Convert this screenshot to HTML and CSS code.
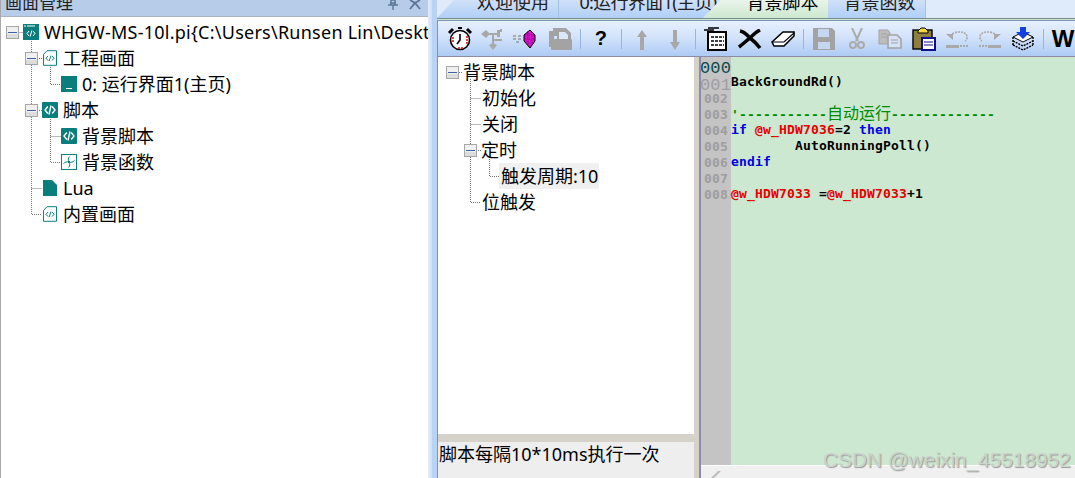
FILE: index.html
```html
<!DOCTYPE html>
<html lang="zh">
<head>
<meta charset="utf-8">
<title>画面管理</title>
<link rel="stylesheet" href="styles.css">
</head>
<body>
<svg class="defs" width="0" height="0" aria-hidden="true">
  <defs>
    <symbol id="exp" viewBox="0 0 13 13">
      <rect x=".5" y=".5" width="12" height="12" fill="#f0f0f0" stroke="#a6a6a6"/>
      <rect x="1" y="8" width="11" height="4" fill="#dcdcdc"/>
      <rect x="2" y="6" width="9" height="1" fill="#3f5fa8"/>
    </symbol>
    <symbol id="code-outline" viewBox="0 0 16 16">
      <path d="M1.5 4.5 5 .7H14.5V15.3H1.5Z" fill="#fff" stroke="#0d7f7f" stroke-width="1"/>
      <path d="M6 6 4 8.3 6 10.6M10 6l2 2.3-2 2.3M8.9 5.6 7.2 11" fill="none" stroke="#0d7f7f"/>
    </symbol>
    <symbol id="code-solid" viewBox="0 0 16 16">
      <rect width="16" height="16" rx="1" fill="#0a7d7d"/>
      <path d="M5.8 4.5 3 8l2.8 3.5M10.2 4.5 13 8l-2.8 3.5M9 3.500 7 12.500" fill="none" stroke="#fff" stroke-width="1.4"/>
    </symbol>
    <symbol id="flow" viewBox="0 0 16 16">
      <rect x=".5" y=".5" width="15" height="15" fill="#fff" stroke="#0d7f7f"/>
      <path d="M8 8C7 6 7 4 8.500 2.500M8 8C10 9 12 8 13.500 6.500M8 8C6 7.500 4 8 2.500 9.500M8 8C9 10 9 12 7.500 13.500" fill="none" stroke="#0d7f7f"/>
      <circle cx="8" cy="8" r="1.200" fill="#0d7f7f"/>
    </symbol>
  </defs>
</svg>

<div class="app">
  <aside class="left-panel">
    <header class="panel-head">
      <span class="panel-title">画面管理</span>
      <span class="panel-btns">
        <svg width="12" height="10" viewBox="0 0 12 10"><path d="M3 3h6M4 0h4v5H4zM1 5h10M6 5v5" fill="none" stroke="#5a7596" stroke-width="1.4"/></svg>
        <svg width="14" height="10" viewBox="0 0 14 10"><path d="M2 9 7 3l5 6M2 0l5 3 5-3" fill="none" stroke="#5a7596" stroke-width="1.8"/></svg>
      </span>
    </header>
    <div class="tree project-tree">
      <svg class="tree-lines" width="120" height="230" viewBox="0 0 120 230">
        <path d="M18.500 15.500H23M31.500 22V197.500H42M31.500 171.500H42M37 41.500H42M50.500 48V67.500H61M50.500 100V145.500H61M50.500 119.500H61M37 93.500H42" fill="none" stroke="#777" stroke-dasharray="1 1"/>
      </svg>
      <div class="row lv0"><svg class="exp" width="13" height="13"><use href="#exp"/></svg>
        <svg class="ico" width="16" height="16" viewBox="0 0 16 16"><rect width="16" height="16" fill="#0a7d7d"/><path d="M1 2h2M4 2h8" stroke="#fff"/><path d="M6 7 4 9.500 6 12M10 7l2 2.500L10 12M8.800 6.500 7.200 12.500" fill="none" stroke="#fff"/></svg>
        <span class="label root-label">WHGW-MS-10l.pi{C:\Users\Runsen Lin\Desktop\WHGW-MS-10l</span></div>
      <div class="row lv1"><svg class="exp" width="13" height="13"><use href="#exp"/></svg>
        <svg class="ico" width="16" height="16"><use href="#code-outline"/></svg>
        <span class="label">工程画面</span></div>
      <div class="row lv2">
        <svg class="ico" width="16" height="16" viewBox="0 0 16 16"><rect width="16" height="16" fill="#0a7d7d"/><rect x="5" y="12" width="6" height="1" fill="#fff"/></svg>
        <span class="label">0: 运行界面1(主页)</span></div>
      <div class="row lv1"><svg class="exp" width="13" height="13"><use href="#exp"/></svg>
        <svg class="ico" width="16" height="16"><use href="#code-solid"/></svg>
        <span class="label">脚本</span></div>
      <div class="row lv2">
        <svg class="ico" width="16" height="16"><use href="#code-solid"/></svg>
        <span class="label">背景脚本</span></div>
      <div class="row lv2">
        <svg class="ico" width="16" height="16"><use href="#flow"/></svg>
        <span class="label">背景函数</span></div>
      <div class="row lv1b">
        <svg class="ico" width="16" height="16" viewBox="0 0 16 16"><path d="M1 0H10L15 5V16H1Z" fill="#0a7d7d"/></svg>
        <span class="label">Lua</span></div>
      <div class="row lv1b">
        <svg class="ico" width="16" height="16"><use href="#code-outline"/></svg>
        <span class="label">内置画面</span></div>
    </div>
  </aside>

  <div class="splitter"></div>

  <main class="workspace">
    <nav class="tabs">
      <span class="tab tab-welcome">欢迎使用</span>
      <span class="tab tab-run">0:运行界面1(主页)</span>
      <span class="tab tab-active">背景脚本</span>
      <span class="tab tab-func">背景函数</span>
    </nav>
    <div class="tab-rule"></div>
    <div class="editor-frame">
      <div class="toolbar">
        <span class="tool"><svg width="26" height="24" viewBox="0 0 26 24"><path d="M2 6 6 2M24 6l-4-4" stroke="#000" stroke-width="3"/><path d="M11 1h4" stroke="#000" stroke-width="2"/><circle cx="13" cy="13" r="9.500" fill="#fff" stroke="#000" stroke-width="1.600"/><path d="M13 7v6l-3 4" fill="none" stroke="#000" stroke-width="1.600"/><path d="M20 9v8M6 10v6M11 21h6" stroke="#e01818" stroke-width="1.600" stroke-dasharray="2 1"/></svg></span>
        <span class="tool"><svg width="26" height="24" viewBox="0 0 26 24"><g fill="#a8a8a8"><path d="M1 7 6 3l4 4-4 4z"/><rect x="9" y="6" width="10" height="2"/><rect x="12" y="6" width="2" height="12"/><rect x="12" y="12" width="10" height="2"/><path d="M13 16l4 2-4 5-4-5z"/><path d="M17 3h3v7h-3zM20 2h2v3h-2z"/></g></svg></span>
        <span class="tool"><svg width="26" height="24" viewBox="0 0 26 24"><path d="M0 9h3M5 9h3M0 12h3M5 12h3M3 15h3" stroke="#999" stroke-width="1.500"/><path d="M17 3l5 5v6l-5 7-6-7V8z" fill="#d014c8" stroke="#000"/><path d="M12 8h9M12 12h9M15 4v15M19 5v13" stroke="#7a0a78" stroke-dasharray="1 1"/></svg></span>
        <span class="tool"><svg width="26" height="24" viewBox="0 0 26 24"><path d="M6 1h13l5 5v8H10V9H6z" fill="#a3a3a3"/><rect x="2" y="4" width="5" height="16" fill="#a3a3a3"/><rect x="4" y="12" width="21" height="11" rx="1" fill="#a3a3a3"/><path d="M12 5h6l3 3v4H12z" fill="#dbe8fb"/></svg></span>
        <span class="tool-sep"></span>
        <span class="tool tool-text">?</span>
        <span class="tool-sep"></span>
        <span class="tool"><svg width="14" height="24" viewBox="0 0 14 24"><path d="M7 3 12 10H9V23H5V10H2Z" fill="#a8a8a8"/></svg></span>
        <span class="tool"><svg width="14" height="24" viewBox="0 0 14 24"><path d="M7 23 12 15H9V3H5V15H2Z" fill="#a8a8a8"/></svg></span>
        <span class="tool-sep"></span>
        <span class="tool"><svg width="26" height="24" viewBox="0 0 26 24"><path d="M1 3h10M5 1h11" stroke="#000" stroke-width="1.500"/><rect x="5" y="5" width="18" height="18" fill="#fff" stroke="#000" stroke-width="2"/><path d="M8 10h13M8 14h13M8 18h13" stroke="#000" stroke-dasharray="3 1" stroke-width="1.400"/></svg></span>
        <span class="tool"><svg width="24" height="20" viewBox="0 0 24 20"><path d="M2 2C7 3 10 7 12 9 15 6 18 3 22 1M12 9C8 12 5 15 1 18M12 9C16 12 19 15 22 19" fill="none" stroke="#000" stroke-width="3.500"/></svg></span>
        <span class="tool"><svg width="24" height="18" viewBox="0 0 24 18"><path d="M1 12 12 2h11v4L13 16H3z" fill="#fff" stroke="#000" stroke-width="1.600"/><path d="M1 12h12l10-9" fill="none" stroke="#000" stroke-width="1.200"/></svg></span>
        <span class="tool-sep"></span>
        <span class="tool"><svg width="22" height="22" viewBox="0 0 22 22"><path d="M0 0h19l3 3v19H0z" fill="#a3a3a3"/><rect x="5" y="1" width="11" height="8" fill="#c4d6f0"/><rect x="5" y="14" width="12" height="7" fill="#c4d6f0"/></svg></span>
        <span class="tool"><svg width="16" height="22" viewBox="0 0 16 22"><path d="M3 0 9 13M13 0 7 13" stroke="#ababab" stroke-width="2"/><circle cx="4" cy="17" r="3" fill="none" stroke="#ababab" stroke-width="2"/><circle cx="12" cy="17" r="3" fill="none" stroke="#ababab" stroke-width="2"/></svg></span>
        <span class="tool"><svg width="24" height="20" viewBox="0 0 24 20"><path d="M1 1h9l2 3v11H1z" fill="#bcbcbc" stroke="#a3a3a3"/><path d="M10 6h9l4 4v9H10z" fill="#d6e3f7" stroke="#a3a3a3" stroke-width="1.600"/><path d="M13 11h7M13 14h7M3 5h6M3 8h6" stroke="#a3a3a3"/></svg></span>
        <span class="tool"><svg width="24" height="24" viewBox="0 0 24 24"><rect x="1" y="3" width="19" height="19" fill="#8e7f3e" stroke="#000" stroke-width="1.400"/><path d="M6 4l3-3h4l3 3v2H6z" fill="#f4d83a" stroke="#000"/><rect x="10" y="11" width="13" height="12" fill="#fff" stroke="#0b0f8c" stroke-width="2"/><path d="M12 15h9M12 18h9" stroke="#0b0f8c"/></svg></span>
        <span class="tool"><svg width="24" height="18" viewBox="0 0 24 18"><path d="M5 6C9 1 17 1 21 4c2 3 1 6-1 7" fill="none" stroke="#a9a9a9" stroke-width="1.600" stroke-dasharray="2 1"/><path d="M1 4h7v6z" fill="#a9a9a9"/><rect x="1" y="15" width="13" height="3" fill="#a9a9a9"/><path d="M15 16h8" stroke="#a9a9a9" stroke-width="2" stroke-dasharray="2 1"/></svg></span>
        <span class="tool"><svg width="24" height="18" viewBox="0 0 24 18"><path d="M19 6C15 1 7 1 3 4c-2 3-1 6 1 7" fill="none" stroke="#a9a9a9" stroke-width="1.600" stroke-dasharray="2 1"/><path d="M23 4h-7v6z" fill="#a9a9a9"/><rect x="10" y="15" width="13" height="3" fill="#a9a9a9"/><path d="M1 16h8" stroke="#a9a9a9" stroke-width="2" stroke-dasharray="2 1"/></svg></span>
        <span class="tool"><svg width="24" height="24" viewBox="0 0 24 24"><path d="M2 10 12 5l10 5-10 5z" fill="#fff" stroke="#000"/><path d="M2 14l10 5 10-5M2 18l10 5 10-5M2 10v8M22 10v8" fill="none" stroke="#000" stroke-width="1.400" stroke-dasharray="2 1"/><path d="M9 0h6v5h4l-7 7-7-7h4z" fill="#1440e0"/></svg></span>
        <span class="tool-sep"></span>
        <span class="tool tool-w">W</span>
      </div>

      <div class="editor-body">
        <section class="script-pane">
          <div class="tree script-tree">
            <svg class="tree-lines" width="120" height="170" viewBox="0 0 120 170">
              <path d="M21 15.500H25M32.500 22V145.500H43M32.500 41.500H43M32.500 67.500H43M38 93.500H43M51.500 100V119.500H61" fill="none" stroke="#777" stroke-dasharray="1 1"/>
            </svg>
            <div class="srow s0"><svg class="exp" width="13" height="13"><use href="#exp"/></svg><span class="label">背景脚本</span></div>
            <div class="srow s1"><span class="label">初始化</span></div>
            <div class="srow s1"><span class="label">关闭</span></div>
            <div class="srow s1x"><svg class="exp" width="13" height="13"><use href="#exp"/></svg><span class="label">定时</span></div>
            <div class="srow s2"><span class="label selected">触发周期:10</span></div>
            <div class="srow s1"><span class="label">位触发</span></div>
          </div>
          <div class="hint">脚本每隔10*10ms执行一次</div>
        </section>

        <div class="pane-divider"></div>

        <section class="code-pane">
          <div class="code-main">
            <div class="gutter">
              <div class="num-cur">000</div>
              <div class="num-big">001</div>
              <div class="num">002</div>
              <div class="num">003</div>
              <div class="num">004</div>
              <div class="num">005</div>
              <div class="num">006</div>
              <div class="num">007</div>
              <div class="num">008</div>
            </div>
            <div class="code">
              <div class="ln"></div>
              <div class="ln">BackGroundRd()</div>
              <div class="ln"></div>
              <div class="ln cmt">'-----------<span class="cjk">自动运行</span>-------------</div>
              <div class="ln"><b class="kw">if</b> <b class="var">@w_HDW7036</b>=2 <b class="kw">then</b></div>
              <div class="ln">        AutoRunningPoll()</div>
              <div class="ln kw">endif</div>
              <div class="ln"></div>
              <div class="ln"><b class="var">@w_HDW7033</b> =<b class="var">@w_HDW7033</b>+1</div>
            </div>
          </div>
          <div class="code-scroll"><svg class="scroll-mark" width="12" height="10" viewBox="0 0 12 10"><path d="M1 10 8 3h3L4 10z" fill="#bdbdbd"/></svg></div>
        </section>
      </div>
    </div>
  </main>
</div>
<div class="watermark">CSDN @weixin_45518952</div>
</body>
</html>
```

FILE: styles.css
```css
* { box-sizing: border-box; }
html, body { margin: 0; padding: 0; height: 100%; overflow: hidden; }
body {
  background: #fff;
  font-family: "Noto Sans", "Noto Sans CJK SC", sans-serif;
  font-size: 18px;
  color: #000;
}
.defs { position: absolute; }
.app { display: flex; width: 1075px; height: 478px; position: relative; overflow: hidden; }

.left-panel {
  width: 428px;
  flex: none;
  display: flex;
  flex-direction: column;
  border-left: 1px solid #a9a9a9;
  background: #fff;
  overflow: hidden;
}
.panel-head {
  height: 17px;
  flex: none;
  background: #b6cce8;
  border-bottom: 1px solid #a9b4c2;
  display: flex;
  justify-content: space-between;
  padding: 0 6px 0 4px;
  overflow: hidden;
  font-size: 17px;
  color: #222;
}
.panel-title { line-height: 5px; }
.panel-btns { display: flex; gap: 9px; align-items: flex-start; }

.tree { position: relative; overflow: hidden; }
.project-tree { padding-top: 2px; flex: 1; }
.tree-lines { position: absolute; left: -1px; top: 0; }
.script-tree .tree-lines { left: 0; }

.row, .srow {
  height: 26px;
  display: flex;
  align-items: center;
  white-space: nowrap;
  position: relative;
}
.exp, .ico { flex: none; }
.label { line-height: 26px; }
.root-label { letter-spacing: .25px; }

.lv0 { padding-left: 5px; }
.lv0 .exp { margin-right: 4px; }
.lv0 .ico { margin-right: 5px; }
.lv1 { padding-left: 24px; }
.lv1 .exp { margin-right: 4px; }
.lv1 .ico { margin-right: 5px; }
.lv1b { padding-left: 41px; }
.lv1b .ico { margin-right: 5px; }
.lv2 { padding-left: 60px; }
.lv2 .ico { margin-right: 5px; }

.splitter {
  width: 9px;
  flex: none;
  background: linear-gradient(to right, #e3ecf8, #cfe0f5 40%, #b9d3f6 50%);
}

.workspace {
  flex: 1;
  min-width: 0;
  display: flex;
  flex-direction: column;
  background: #bcd5f6;
}
.tabs {
  height: 18px;
  flex: none;
  display: flex;
  background: #dfeafa;
  overflow: hidden;
  color: #222;
}
.tab {
  line-height: 5px;
  display: block;
  text-align: center;
  background: linear-gradient(to bottom, #d0e1f8, #b0cff8);
  flex: none;
  white-space: nowrap;
}
.tab-welcome {
  width: 122px;
  padding-left: 31px;
  border-right: 1px solid #a4c0e6;
  clip-path: polygon(17px 0, 100% 0, 100% 100%, 0 100%);
}
.tab-run {
  width: 161px;
  padding-left: 17px;
  letter-spacing: -.65px;
  clip-path: polygon(0 0, 100% 0, 144px 100%, 0 100%);
}
.tab-active {
  width: 124px;
  background: linear-gradient(to bottom, #eaf5ea, #cde8d0);
  color: #000;
  margin-left: -16px;
  padding-left: 33px;
  clip-path: polygon(17px 0, 100% 0, 100% 100%, 0 100%);
}
.tab-func {
  width: 98px;
  padding-left: 6px;
  border-right: 1px solid #a4c0e6;
}
.tab-rule { height: 2px; flex: none; background: #7a8a88; border-bottom: 1px solid #cde8d0; }

.editor-frame {
  flex: 1;
  min-height: 0;
  display: flex;
  flex-direction: column;
  padding-left: 1px;
  background: linear-gradient(to right, #8e8ba8 1px, #fff 1px);
}
.toolbar {
  height: 37px;
  flex: none;
  padding-left: 5.500px;
  display: flex;
  align-items: center;
  background: linear-gradient(to bottom, #e6f0fe 0, #d6e5fb 40%, #aecbf4 100%);
  border-top: 1px solid #7d95b8;
  border-bottom: 1px solid #8e8ba8;
  overflow: hidden;
}
.tool {
  width: 33.200px;
  height: 26px;
  flex: none;
  display: flex;
  align-items: center;
  justify-content: center;
}
.tool-sep {
  width: 8px;
  height: 20px;
  flex: none;
  background: linear-gradient(#98b5dd, #98b5dd) center / 1px 100% no-repeat;
}
.tool-text { font: bold 20px "Liberation Sans", sans-serif; }
.tool-w {
  font: bold 24px "Liberation Sans", sans-serif;
  justify-content: flex-start;
  padding-left: 4px;
}

.editor-body { flex: 1; min-height: 0; display: flex; }
.script-pane {
  width: 256px;
  flex: none;
  display: flex;
  flex-direction: column;
  background: #fff;
}
.script-tree { flex: 1; padding-top: 2px; }
.srow .exp { margin-right: 4px; }
.s0 { padding-left: 8px; }
.s1 { padding-left: 44px; }
.s1x { padding-left: 26px; }
.s2 { padding-left: 61px; }
.selected { background: #f0f0f0; padding: 0 1px 0 2px; }
.hint {
  height: 44px;
  flex: none;
  background: #eeeeee;
  border-top: 8px solid #d6d2ca;
  line-height: 24px;
  padding-left: 1px;
}
.pane-divider {
  width: 7px;
  flex: none;
  background: linear-gradient(to right, #d6d2ca 5px, #8e8ba8 5px);
}

.code-pane { flex: 1; min-width: 0; display: flex; flex-direction: column; }
.code-main { flex: 1; min-height: 0; display: flex; background: #cde8d0; overflow: hidden; }
.gutter {
  width: 30px;
  flex: none;
  background: #c4c4c4;
  font: bold 13px/16px "DejaVu Sans Mono", monospace;
  letter-spacing: .17px;
  color: #9e9e9e;
  padding-top: 3px;
  overflow: hidden;
}
.num { height: 16px; padding-left: 3px; }
.num-cur, .num-big {
  font: 400 17px/17px "Liberation Mono", monospace;
  height: 17px;
  color: #0a4a4a;
  margin-left: -1px;
}
.num-big { color: #9e9e9e; height: 14px; }
.code {
  flex: 1;
  padding-top: 1px;
  font: bold 13px/16px "DejaVu Sans Mono", monospace;
  letter-spacing: .17px;
  color: #000;
}
.ln { height: 16px; white-space: pre; }
.kw { color: #0000e6; font-weight: bold; }
.var { color: #e60000; font-weight: bold; }
.cmt { color: #008a00; line-height: 12px; }
.cjk { font: 400 16px/12px "Noto Sans CJK SC", sans-serif; letter-spacing: 0; }
.code-scroll {
  height: 13px;
  flex: none;
  background: #f0f0f0;
  border-top: 1px solid #fff;
  padding-left: 9px;
  overflow: hidden;
}
.scroll-mark { display: block; margin-top: 2px; }
.watermark {
  position: absolute;
  left: 823px;
  top: 448px;
  font: 20.800px/24px "Liberation Sans", sans-serif;
  color: #c9d2cb;
  text-shadow: 1px 1px 1px #9a9a9a;
  white-space: nowrap;
}
```
